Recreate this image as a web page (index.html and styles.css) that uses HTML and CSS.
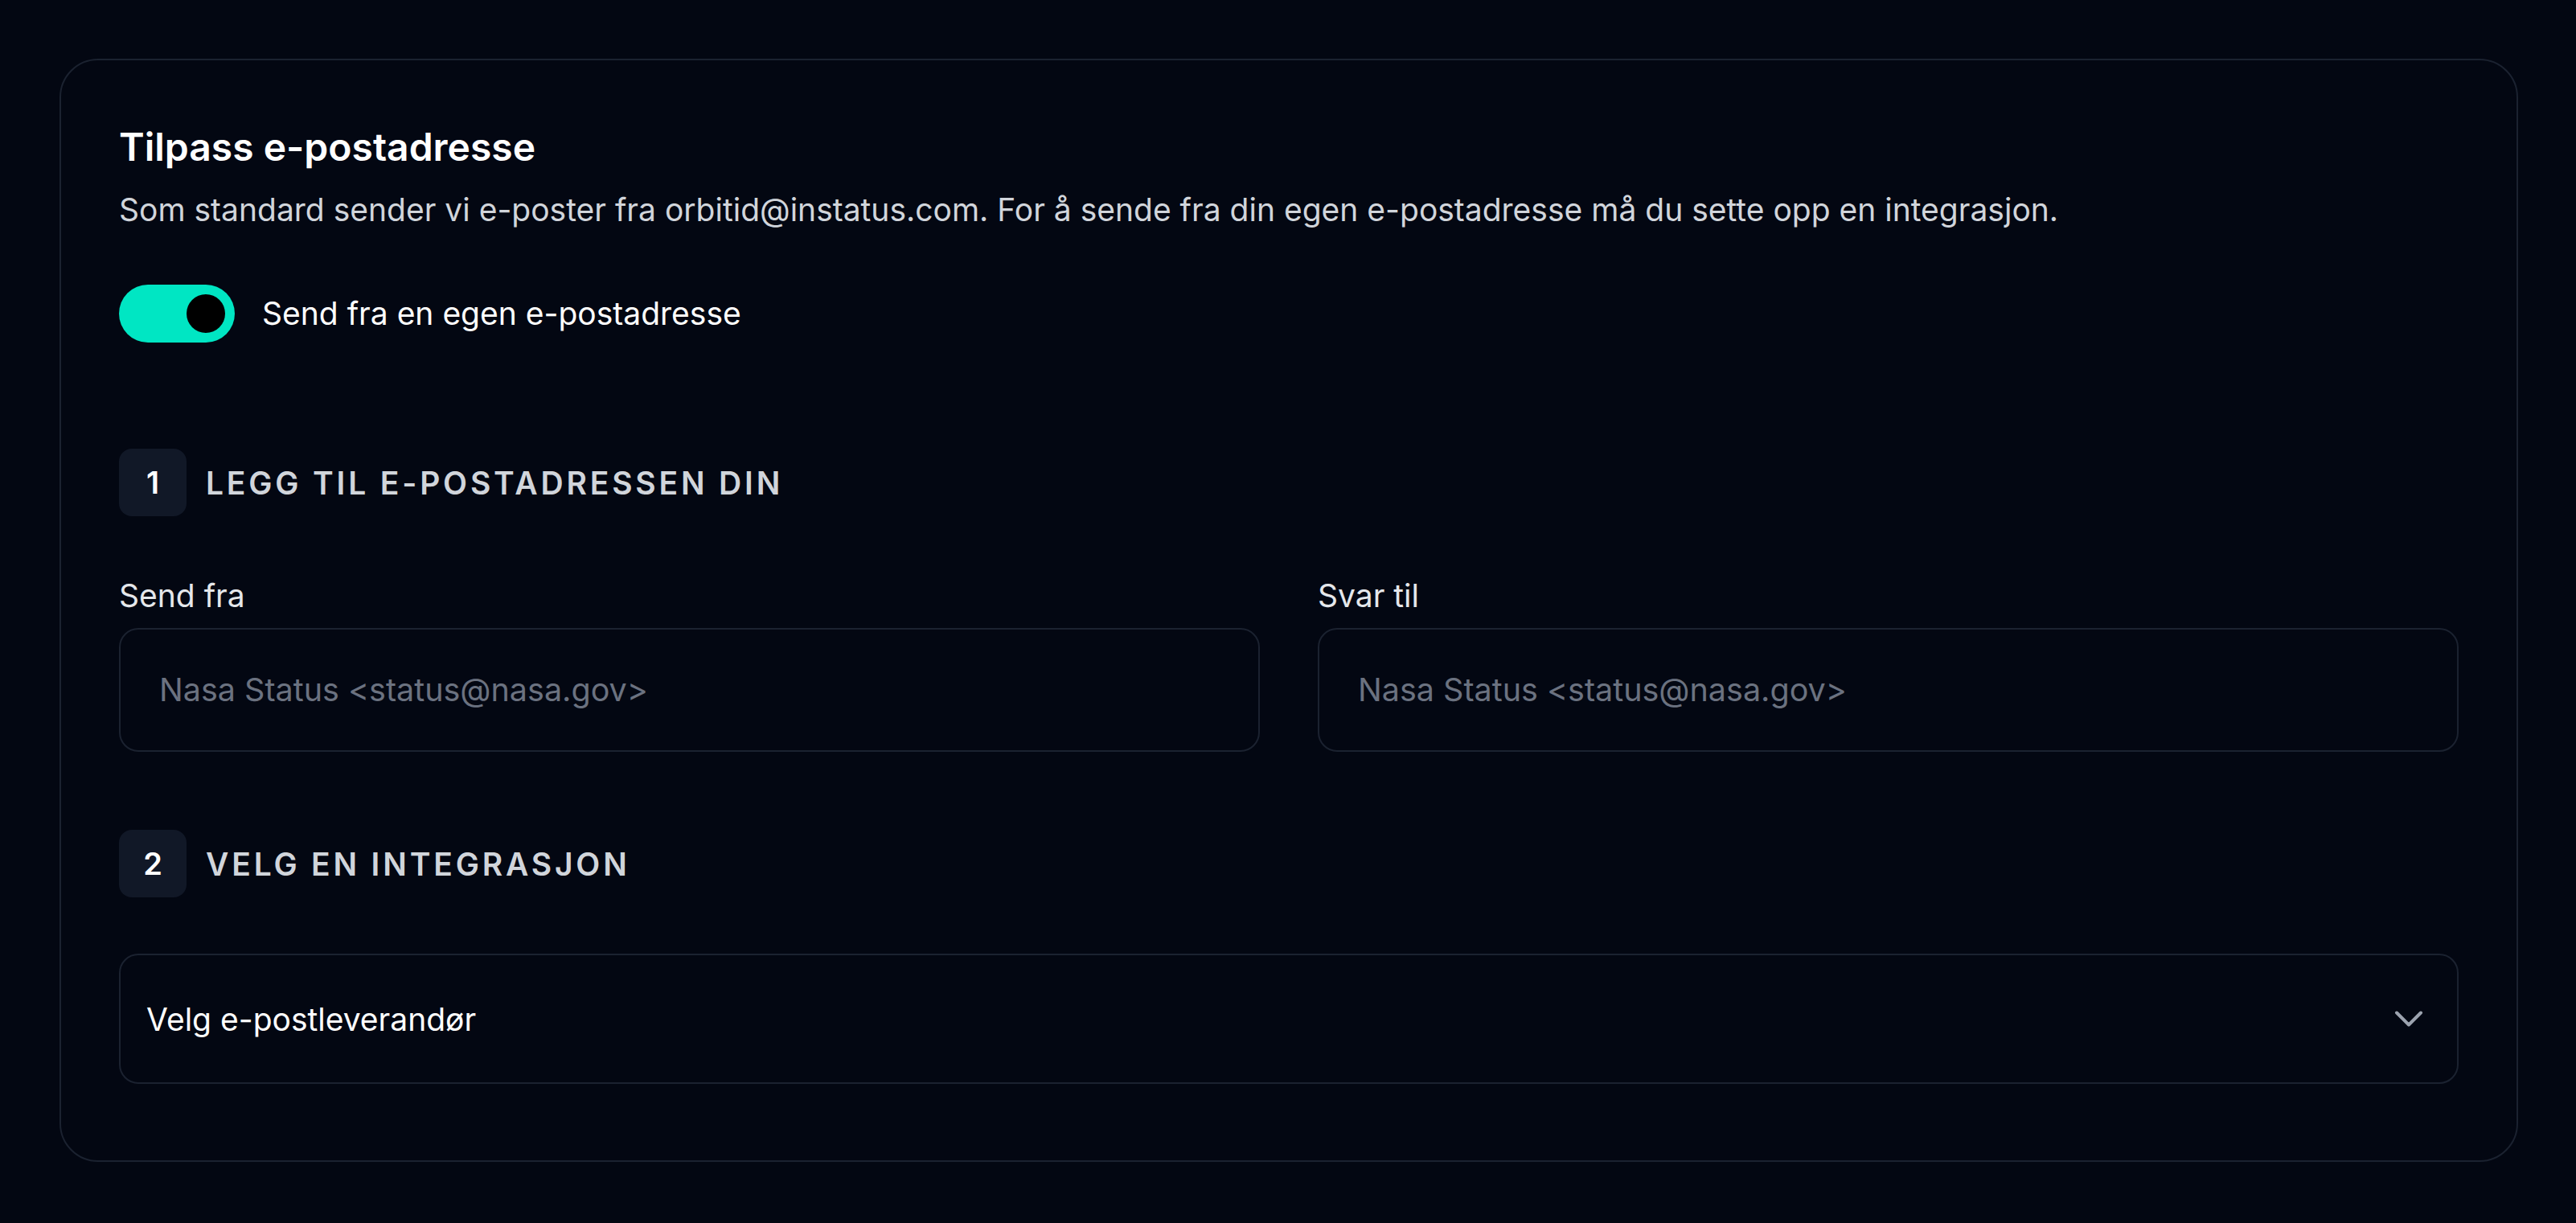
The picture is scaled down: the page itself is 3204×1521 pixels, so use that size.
FILE: index.html
```html
<!DOCTYPE html>
<html>
    <head>
        <title>Tilpass e-postadresse</title>
        <link rel="stylesheet" href="styles.css">
    </head>
    <body>
        <div class="card">
            <h2 class="card-title">Tilpass e-postadresse</h2>
            <p class="card-desc">Som standard sender vi e-poster fra orbitid@instatus.com. For å sende fra din egen e-postadresse må du sette opp en integrasjon.</p>
            <label class="toggle-row">
                <span class="toggle on"><span class="toggle-knob"></span></span>
                <span class="toggle-label">Send fra en egen e-postadresse</span>
            </label>

            <div class="step">
                <span class="step-num">1</span>
                <span class="step-title">Legg til e-postadressen din</span>
            </div>
            <div class="field-grid">
                <div class="field">
                    <label class="field-label">Send fra</label>
                    <input class="text-input" type="text" placeholder="Nasa Status &lt;status@nasa.gov&gt;">
                </div>
                <div class="field">
                    <label class="field-label">Svar til</label>
                    <input class="text-input" type="text" placeholder="Nasa Status &lt;status@nasa.gov&gt;">
                </div>
            </div>

            <div class="step step-two">
                <span class="step-num">2</span>
                <span class="step-title">Velg en integrasjon</span>
            </div>
            <div class="select">
                <span class="select-value">Velg e-postleverandør</span>
                <svg class="select-chevron" width="48" height="48" viewBox="0 0 24 24" fill="none">
                    <path d="M4.5 8.25 12 15.75 19.5 8.25" stroke="currentColor" stroke-width="2" stroke-linecap="round" stroke-linejoin="round"/>
                </svg>
            </div>
        </div>
    </body>
</html>
```

FILE: styles.css
```css
body {
    margin: 0;
    padding: 73px 72px 72px 74px;
    background-color: #030712;
    font-family: Inter, "Noto Sans", sans-serif;
    color: #ffffff;
}
.card {
    border: 2px solid #1b2230;
    border-radius: 48px;
    padding: 76px 72px 95px 72px;
}
.card-title {
    margin: 0;
    font-size: 48px;
    line-height: 64px;
    font-weight: 600;
    color: #ffffff;
}
.card-desc {
    margin: 18px 0 0 0;
    font-size: 39px;
    line-height: 56px;
    color: #d1d5db;
}
.toggle-row {
    display: flex;
    align-items: center;
    gap: 34px;
    margin-top: 65px;
}
.toggle {
    display: flex;
    align-items: center;
    justify-content: flex-end;
    box-sizing: border-box;
    width: 144px;
    height: 72px;
    padding: 12px;
    border-radius: 36px;
    background-color: #00e6c3;
}
.toggle-knob {
    width: 48px;
    height: 48px;
    border-radius: 50%;
    background-color: #000000;
}
.toggle-label {
    font-size: 39px;
    line-height: 56px;
    color: #ffffff;
}
.step {
    display: flex;
    align-items: center;
    gap: 24px;
    margin-top: 132px;
}
.step-two {
    margin-top: 97px;
}
.step-num {
    display: flex;
    align-items: center;
    justify-content: center;
    width: 84px;
    height: 84px;
    border-radius: 16px;
    background-color: #111827;
    font-size: 38px;
    font-weight: 600;
    color: #ffffff;
}
.step-title {
    font-size: 39px;
    font-weight: 600;
    letter-spacing: 0.098em;
    text-transform: uppercase;
    color: #d1d5db;
}
.field-grid {
    display: grid;
    grid-template-columns: 1fr 1fr;
    gap: 72px;
    margin-top: 71px;
}
.field {
    display: flex;
    flex-direction: column;
    gap: 12px;
}
.field-label {
    font-size: 39px;
    line-height: 56px;
    color: #e5e7eb;
}
.text-input {
    box-sizing: border-box;
    height: 154px;
    padding: 0 48px;
    border: 2px solid #1b2230;
    border-radius: 24px;
    background-color: transparent;
    font-family: inherit;
    font-size: 39.5px;
    color: #ffffff;
    outline: none;
}
.text-input::placeholder {
    color: #6b7280;
}
.select {
    display: flex;
    align-items: center;
    justify-content: space-between;
    box-sizing: border-box;
    height: 162px;
    margin-top: 70px;
    padding: 0 36px 0 32px;
    border: 2px solid #1b2230;
    border-radius: 24px;
}
.select-value {
    font-size: 39px;
    color: #ffffff;
}
.select-chevron {
    color: #9ca3af;
}
```
